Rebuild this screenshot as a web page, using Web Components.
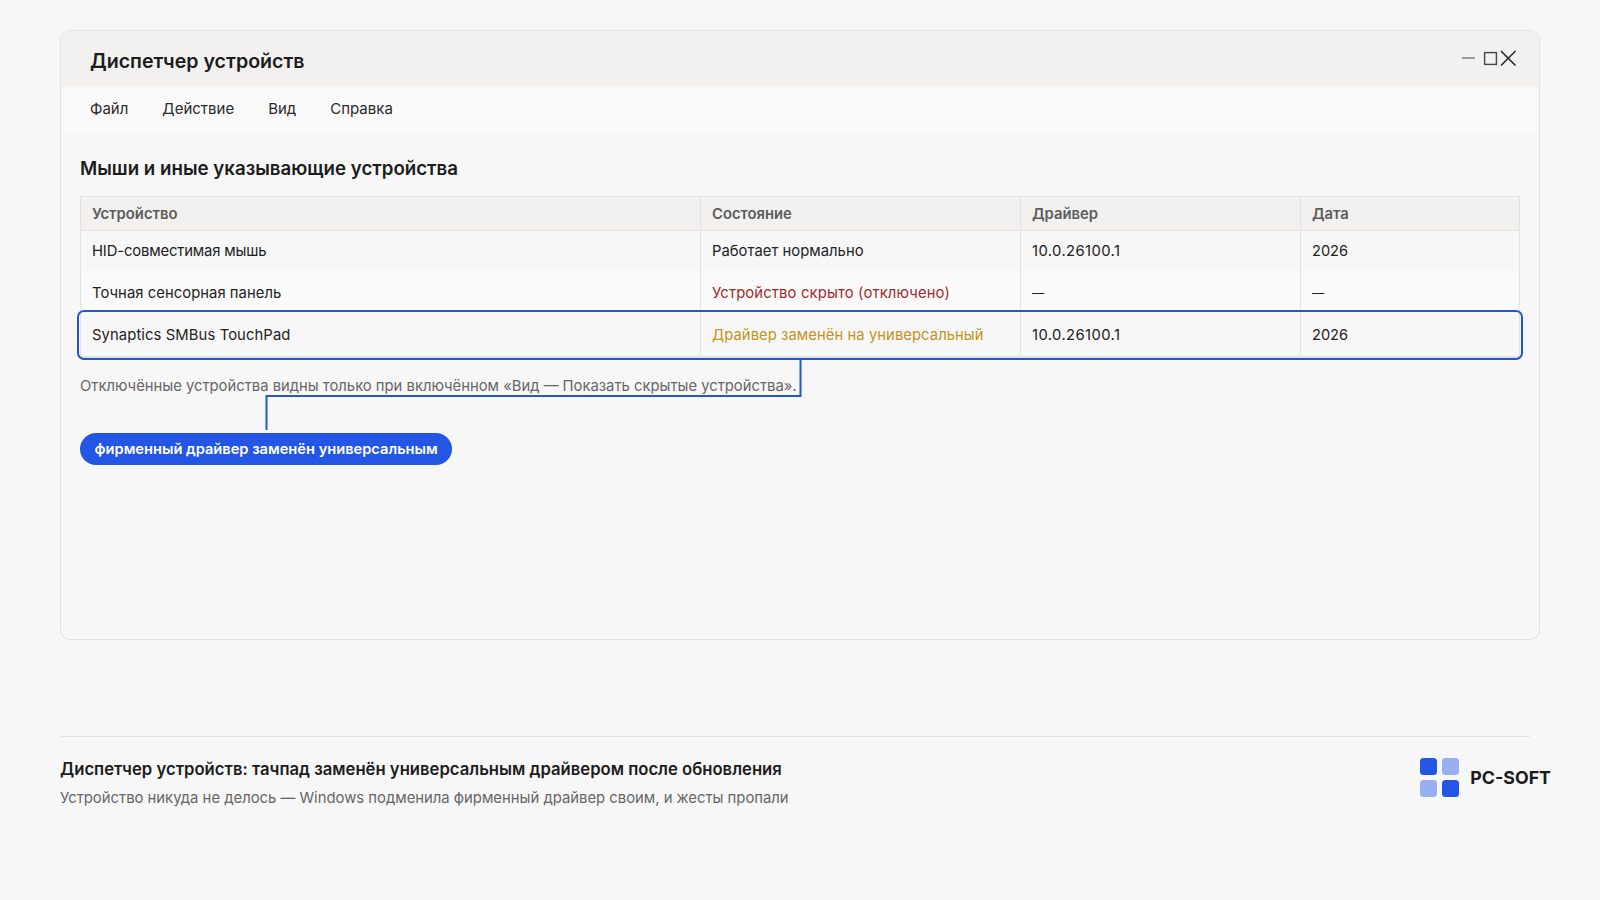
<!DOCTYPE html>
<html lang="ru">
<head>
<meta charset="utf-8">
<title>Диспетчер устройств</title>
<style>
  html, body { margin: 0; height: 100%; }
  body {
    background: #f7f7f7;
    color: #1c1c1c;
    font-family: Inter, "Noto Sans", sans-serif;
    overflow: hidden;
  }
  .page { display: flex; flex-direction: column; padding: 30px 0 0 60px; }
</style>
</head>
<body>
<div class="page">
  <app-window heading="Диспетчер устройств">
    <app-menu items="Файл|Действие|Вид|Справка"></app-menu>
    <device-panel heading="Мыши и иные указывающие устройства"></device-panel>
  </app-window>
  <page-footer
    heading="Диспетчер устройств: тачпад заменён универсальным драйвером после обновления"
    sub="Устройство никуда не делось — Windows подменила фирменный драйвер своим, и жесты пропали"></page-footer>
</div>

<script>
class AppWindow extends HTMLElement {
  constructor() {
    super();
    this.shadowDOM = this.attachShadow({ mode: "open" });
    this.shadowDOM.innerHTML = `
      <style>
        :host {
          display: flex;
          flex-direction: column;
          width: 1480px;
          height: 610px;
          box-sizing: border-box;
          border: 1px solid #e4e3e1;
          border-radius: 10px;
          overflow: hidden;
          background: #f7f7f7;
        }
        .bar {
          display: flex;
          align-items: center;
          justify-content: space-between;
          height: 56px;
          padding: 3px 22px 0 29px;
          box-sizing: border-box;
          background: #f2f1ef;
        }
        h1 { margin: 0; font-size: 19.6px; font-weight: 600; color: #1c1c1c; }
        svg { display: block; margin-top: -6px; }
      </style>
      <div class="bar">
        <h1>${this.getAttribute("heading")}</h1>
        <svg width="56" height="18" viewBox="0 0 56 18" fill="none">
          <path d="M1 9H14" stroke="#444" stroke-width="1.2"/>
          <rect x="23.6" y="3.6" width="11.8" height="11.8" stroke="#444" stroke-width="1.4"/>
          <path d="M40 2L54.500 16.500M54.500 2L40 16.500" stroke="#222" stroke-width="1.5"/>
        </svg>
      </div>
      <slot></slot>
    `;
  }
}

class AppMenu extends HTMLElement {
  constructor() {
    super();
    this.shadowDOM = this.attachShadow({ mode: "open" });
    const items = this.getAttribute("items").split("|");
    this.shadowDOM.innerHTML = `
      <style>
        :host {
          display: flex;
          gap: 34px;
          align-items: center;
          height: 46px;
          padding: 0 29px 3px;
          box-sizing: border-box;
          background: #fafafa;
          font-size: 15px;
          color: #2a2a2a;
        }
      </style>
      ${items.map((item) => `<span>${item}</span>`).join("")}
    `;
  }
}

class DevicePanel extends HTMLElement {
  constructor() {
    super();
    this.shadowDOM = this.attachShadow({ mode: "open" });
    this.shadowDOM.innerHTML = `
      <style>
        :host {
          display: block;
          position: relative;
          padding: 23px 19px 0;
        }
        h2 { margin: 0 0 14px; font-size: 18.7px; line-height: 26px; font-weight: 600; color: #1c1c1c; }
        .note { margin: 18px 0 0; font-size: 14.8px; line-height: 20px; color: #666; }
        .pill { margin-top: 37px; }
        .focus {
          position: absolute;
          left: 16px;
          top: 177px;
          width: 1446px;
          height: 50px;
          box-sizing: border-box;
          border: 2px solid #2456d8;
          border-radius: 7px;
        }
        .link { position: absolute; left: 0; top: 0; pointer-events: none; }
      </style>
      <h2>${this.getAttribute("heading")}</h2>
      <device-table></device-table>
      <p class="note">Отключённые устройства видны только при включённом «Вид — Показать скрытые устройства».</p>
      <call-pill class="pill">фирменный драйвер заменён универсальным</call-pill>
      <div class="focus"></div>
      <svg class="link" width="1000" height="320" fill="none">
        <path d="M739.500 227V263H205.500V297" stroke="#2456d8" stroke-width="2"/>
      </svg>
    `;
  }
}

class DeviceTable extends HTMLElement {
  constructor() {
    super();
    this.shadowDOM = this.attachShadow({ mode: "open" });
    const head = ["Устройство", "Состояние", "Драйвер", "Дата"];
    const rows = [
      { cells: ["HID-совместимая мышь", "Работает нормально", "10.0.26100.1", "2026"], bg: "#f7f7f7", h: 40, track: [-0.14, 0.03] },
      { cells: ["Точная сенсорная панель", "Устройство скрыто (отключено)", "—", "—"], state: "#a32a2a", bg: "#fafafa", h: 43, track: [0.05, 0.14] },
      { cells: ["Synaptics SMBus TouchPad", "Драйвер заменён на универсальный", "10.0.26100.1", "2026"], state: "#c8921a", bg: "#f7f7f7", h: 43, track: [0.1, 0.06] },
    ];
    const cellStyle = (row, i, t) => {
      let css = `height:${row.h}px;background:${row.bg};`;
      if (i === 1 && row.state) css += `color:${row.state};`;
      if (i < 2) css += `letter-spacing:${row.track[i]}px;`;
      if (i === 2 && t !== "—") css += "letter-spacing:.4px;";
      if (t === "—") css += "font-size:12px;";
      if (i === 3 && t !== "—") css += "font-size:14.6px;";
      return css;
    };
    this.shadowDOM.innerHTML = `
      <style>
        :host {
          display: grid;
          grid-template-columns: 619px 320px 280px 1fr;
          width: 1440px;
          box-sizing: border-box;
          border: 1px solid #e4e3e1;
          font-size: 14.8px;
          color: #222;
        }
        .c {
          display: flex;
          align-items: center;
          padding: 0 11px;
          border-left: 1px solid #e4e3e1;
          border-bottom: 1px solid #e4e3e1;
          box-sizing: border-box;
        }
        .c.first { border-left: 0; }
        .c.flat { border-bottom: 0; }
        .h { height: 34px; background: #f2f1ef; font-weight: 600; color: #5c5c5c; }
      </style>
      ${head.map((t, i) => `<div class="c h ${i ? "" : "first"}">${t}</div>`).join("")}
      ${rows.map((row, r) => row.cells.map((t, i) => `
        <div class="c ${i ? "" : "first"} ${r < 2 ? "flat" : ""}" style="${cellStyle(row, i, t)}">${t}</div>`).join("")).join("")}
    `;
  }
}

class CallPill extends HTMLElement {
  constructor() {
    super();
    this.shadowDOM = this.attachShadow({ mode: "open" });
    this.shadowDOM.innerHTML = `
      <style>
        :host {
          display: flex;
          align-items: center;
          width: fit-content;
          height: 32px;
          padding: 0 14.500px;
          border-radius: 16px;
          background: #2456e6;
          color: #fff;
          font-size: 14.65px;
          font-weight: 600;
        }
      </style>
      <slot></slot>
    `;
  }
}

class BrandMark extends HTMLElement {
  constructor() {
    super();
    this.shadowDOM = this.attachShadow({ mode: "open" });
    this.shadowDOM.innerHTML = `
      <style>
        :host { display: flex; align-items: center; gap: 11.5px; font-size: 17.8px; font-weight: 700; color: #1a1a1a; }
        svg { display: block; }
      </style>
      <svg width="39" height="39" viewBox="0 0 39 39">
        <rect x="0" y="0" width="17" height="17" rx="3.500" fill="#2456e6"/>
        <rect x="22" y="0" width="17" height="17" rx="3.500" fill="#2456e6" opacity=".45"/>
        <rect x="0" y="22" width="17" height="17" rx="3.500" fill="#2456e6" opacity=".45"/>
        <rect x="22" y="22" width="17" height="17" rx="3.500" fill="#2456e6"/>
      </svg>
      <span>PC-SOFT</span>
    `;
  }
}

class PageFooter extends HTMLElement {
  constructor() {
    super();
    this.shadowDOM = this.attachShadow({ mode: "open" });
    this.shadowDOM.innerHTML = `
      <style>
        :host { display: block; width: 1491px; margin-top: 96px; }
        .rule { width: 1470px; height: 1px; background: #e4e3e1; }
        .row { display: flex; justify-content: space-between; align-items: flex-start; padding-top: 20px; }
        h3 { margin: 0; font-size: 16.67px; line-height: 24px; font-weight: 600; color: #1c1c1c; }
        p { margin: 7px 0 0; font-size: 14.83px; line-height: 20px; color: #666; }
        brand-mark { margin-top: 1px; }
      </style>
      <div class="rule"></div>
      <div class="row">
        <div>
          <h3>${this.getAttribute("heading")}</h3>
          <p>${this.getAttribute("sub")}</p>
        </div>
        <brand-mark></brand-mark>
      </div>
    `;
  }
}

customElements.define("call-pill", CallPill);
customElements.define("device-table", DeviceTable);
customElements.define("device-panel", DevicePanel);
customElements.define("app-menu", AppMenu);
customElements.define("app-window", AppWindow);
customElements.define("brand-mark", BrandMark);
customElements.define("page-footer", PageFooter);
</script>
</body>
</html>
